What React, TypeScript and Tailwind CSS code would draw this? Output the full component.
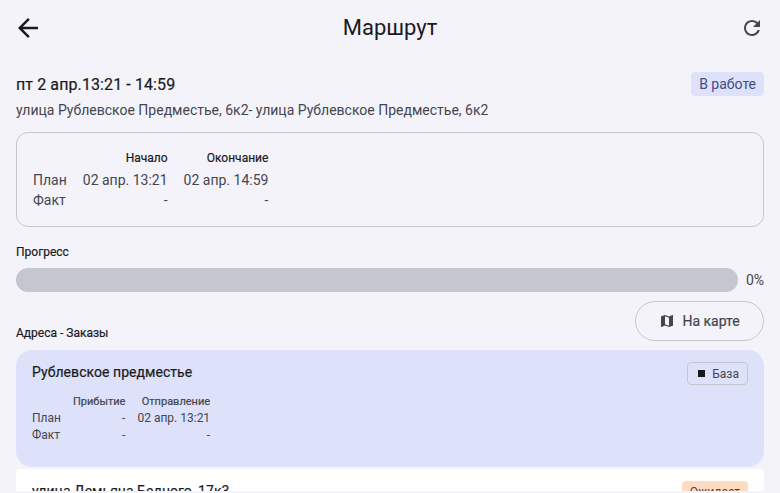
import React from "react";

export default function App() {
  return (
    <div className="h-[493px] w-[780px] overflow-hidden bg-[#f4f3fa] font-['Roboto',sans-serif] text-[#1a1b20]">
      <div className="h-[491px] overflow-hidden">
        <header className="flex h-[56px] items-center justify-between pl-[13px] pr-[16px]">
          <svg width="30" height="30" viewBox="0 0 24 24" className="-mr-[3px] text-[#1a1b20]" fill="currentColor">
            <path d="M20 11H7.83l5.59-5.59L12 4l-8 8 8 8 1.41-1.41L7.83 13H20v-2z" />
          </svg>
          <h1 className="text-[22px] leading-[28px] font-normal">Маршрут</h1>
          <svg width="24" height="24" viewBox="0 0 24 24" className="text-[#44464f]" fill="currentColor">
            <path d="M17.65 6.35C16.2 4.9 14.21 4 12 4c-4.42 0-7.99 3.58-7.99 8s3.57 8 7.99 8c3.73 0 6.84-2.55 7.73-6h-2.08c-.82 2.33-3.04 4-5.65 4-3.31 0-6-2.69-6-6s2.69-6 6-6c1.66 0 3.14.69 4.22 1.78L13 11h7V4l-2.35 2.35z" />
          </svg>
        </header>

        <div className="px-[16px] pt-[16px]">
          <div className="flex h-[24px] items-center justify-between">
            <div className="pt-[1px] text-[16px] leading-[24px] font-normal tracking-[0.1px] [-webkit-text-stroke:0.2px]">пт 2 апр.13:21 - 14:59</div>
            <div className="rounded-[4px] bg-[#dde1f9] px-[8px] text-[14px] leading-[24px] text-[#414e85]">В работе</div>
          </div>
          <div className="mt-[4px] text-[14px] leading-[20px] text-[#44464f]">
            улица Рублевское Предместье, 6к2- улица Рублевское Предместье, 6к2
          </div>

          <div className="mt-[12px] h-[95px] rounded-[12px] border border-[#c5c6d0] px-[16px] pt-[16px]">
            <div className="grid w-fit grid-cols-[auto_auto_auto] gap-x-[16px] text-right text-[14px] leading-[20px] text-[#44464f]">
              <div />
              <div className="pb-[3px] text-[12px] leading-[18px] font-normal text-[#1a1b20] [-webkit-text-stroke:0.2px]">Начало</div>
              <div className="pb-[3px] text-[12px] leading-[18px] font-normal text-[#1a1b20] [-webkit-text-stroke:0.2px]">Окончание</div>
              <div className="text-left">План</div>
              <div>02 апр. 13:21</div>
              <div>02 апр. 14:59</div>
              <div className="text-left">Факт</div>
              <div>-</div>
              <div>-</div>
            </div>
          </div>

          <div className="mt-[17px] text-[12px] leading-[16px] font-normal text-[#1a1b20] [-webkit-text-stroke:0.2px]">Прогресс</div>
          <div className="mt-[8px] flex h-[24px] items-center gap-[8px]">
            <div className="h-[24px] flex-1 rounded-full bg-[#c5c6d0]" />
            <div className="text-[14px] leading-[20px] text-[#44464f]">0%</div>
          </div>

          <div className="mt-[9px] flex h-[40px] items-end justify-between">
            <div className="text-[12px] leading-[16px] font-normal text-[#1a1b20] [-webkit-text-stroke:0.2px]">Адреса - Заказы</div>
            <div className="flex h-[40px] w-[129px] items-center justify-center gap-[7px] rounded-full border border-[#c5c6d0] text-[14px] leading-[20px] font-normal text-[#44464f] [-webkit-text-stroke:0.2px]">
              <svg width="16" height="16" viewBox="0 0 24 24" fill="currentColor">
                <path d="M20.5 3l-.16.03L15 5.1 9 3 3.36 4.9c-.21.07-.36.25-.36.48V20.5c0 .28.22.5.5.5l.16-.03L9 18.9l6 2.1 5.64-1.9c.21-.07.36-.25.36-.48V3.5c0-.28-.22-.5-.5-.5zM15 19l-6-2.11V5l6 2.11V19z" />
              </svg>
              На карте
            </div>
          </div>

          <div className="mt-[9px] flex h-[117px] items-start justify-between rounded-[16px] bg-[#dde1f9] pl-[16px] pr-[16px] pt-[12px]">
            <div>
              <div className="text-[14px] leading-[20px] font-normal tracking-[0.05px] [-webkit-text-stroke:0.2px]">Рублевское предместье</div>
              <div className="mt-[11px] grid w-fit grid-cols-[auto_auto_auto] gap-x-[12px] text-right text-[12px] leading-[17px] text-[#44464f]">
                <div />
                <div className="text-[11px] font-normal [-webkit-text-stroke:0.2px]">Прибытие</div>
                <div className="text-[11px] font-normal [-webkit-text-stroke:0.2px]">Отправление</div>
                <div className="text-left">План</div>
                <div>-</div>
                <div>02 апр. 13:21</div>
                <div className="text-left">Факт</div>
                <div>-</div>
                <div>-</div>
              </div>
            </div>
            <div className="flex h-[23px] items-center gap-[7px] rounded-[4px] border border-[#c5c6d0] pl-[10px] pr-[8px] text-[12px] leading-[16px] text-[#44464f]">
              <span className="h-[7px] w-[7px] bg-[#1a1b20]" />
              База
            </div>
          </div>

          <div className="mt-[2px] flex h-[60px] items-start justify-between rounded-t-[4px] bg-white pl-[16px] pr-[16px] pt-[12px]">
            <div className="text-[14px] leading-[20px] font-normal tracking-[0.03px] [-webkit-text-stroke:0.2px]">улица Демьяна Бедного, 17к3</div>
            <div className="rounded-[4px] bg-[#ffdcc1] px-[8px] text-[12px] leading-[22px] text-[#44464f]">Ожидает</div>
          </div>
        </div>
      </div>
    </div>
  );
}
